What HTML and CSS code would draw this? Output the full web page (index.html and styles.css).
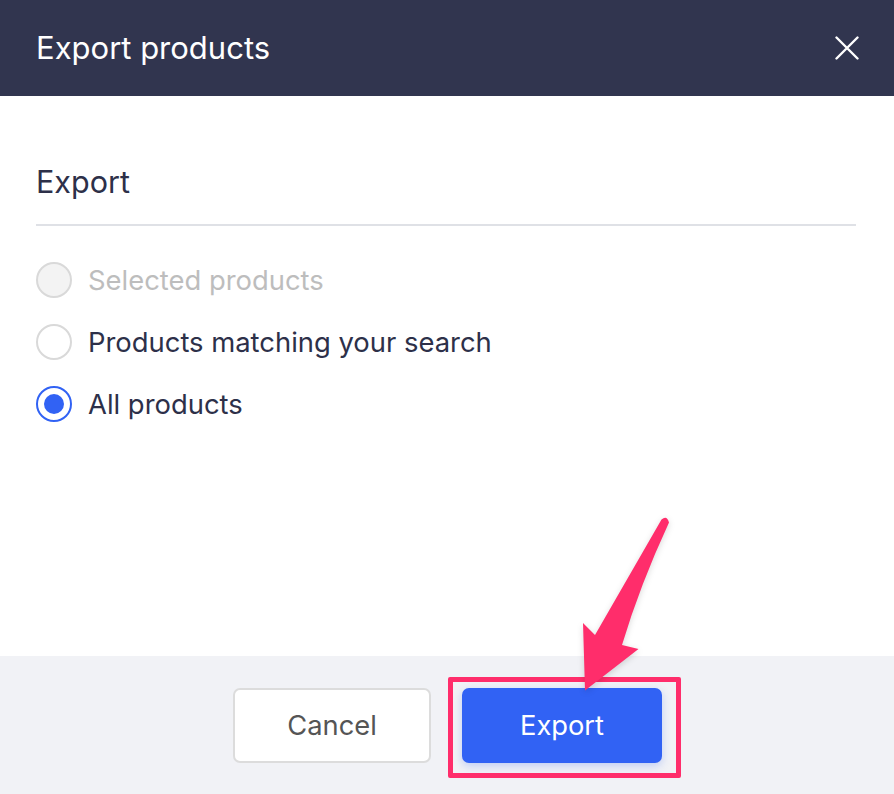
FILE: index.html
```html
<!DOCTYPE html>
<html lang="en">
<head>
<meta charset="utf-8">
<title>Export products</title>
<link rel="stylesheet" href="styles.css">
</head>
<body>
<div class="modal">
  <header class="modal-header">
    <h1 class="modal-title">Export products</h1>
    <button class="close-btn" aria-label="Close">
      <svg viewBox="0 0 24 24" width="24" height="24"><path d="M1.5 1.5 L22.5 22.5 M22.5 1.5 L1.5 22.5" stroke="#fff" stroke-width="2.4" stroke-linecap="round" fill="none"/></svg>
    </button>
  </header>
  <main class="modal-body">
    <h2 class="section-title">Export</h2>
    <div class="radio-list">
      <label class="radio-row is-disabled"><span class="radio"></span><span class="radio-label">Selected products</span></label>
      <label class="radio-row"><span class="radio"></span><span class="radio-label">Products matching your search</span></label>
      <label class="radio-row is-checked"><span class="radio"></span><span class="radio-label">All products</span></label>
    </div>
  </main>
  <footer class="modal-footer">
    <button class="btn btn-cancel">Cancel</button>
    <div class="highlight-wrap">
      <button class="btn btn-primary">Export</button>
      <span class="highlight"></span>
    </div>
  </footer>
  <svg class="arrow" width="110" height="195" viewBox="0 0 110 195">
    <path d="M91.5 14.5 L25 130 L13 118 L15 185.5 L68.5 144 L52 140 Q70 80 99 17.5 Q97 10 91.5 14.5 Z" fill="#ff2d6b"/>
  </svg>
</div>
</body>
</html>
```
FILE: styles.css
```css
* { box-sizing: border-box; }
html, body { margin: 0; padding: 0; }
body {
  font-family: Inter, "Noto Sans", sans-serif;
  background: #ffffff;
  color: #2d3049;
}
.modal {
  position: relative;
  width: 894px;
  height: 794px;
  display: flex;
  flex-direction: column;
  background: #fff;
  overflow: hidden;
}
.modal-header {
  height: 96px;
  flex: none;
  background: #31354f;
  display: flex;
  align-items: center;
  justify-content: space-between;
  padding: 0 35px 0 36px;
}
.modal-title {
  margin: 0;
  font-size: 31px;
  line-height: 36px;
  font-weight: 400;
  color: #fff;
  letter-spacing: 0;
}
.close-btn {
  border: 0;
  background: none;
  padding: 0;
  width: 24px;
  height: 24px;
  display: block;
}
.close-btn svg { display: block; }
.modal-body {
  flex: 1;
  padding: 68px 38px 0 36px;
}
.section-title {
  margin: 0;
  font-size: 30.5px;
  line-height: 36px;
  font-weight: 400;
  color: #2d3049;
  padding-bottom: 24px;
  border-bottom: 2px solid #dfe1e6;
}
.radio-list {
  margin-top: 36px;
  display: flex;
  flex-direction: column;
  gap: 26px;
}
.radio-row {
  display: flex;
  align-items: center;
  gap: 16px;
  height: 36px;
  font-size: 27.4px;
  color: #2d3049;
}
.radio {
  width: 36px;
  height: 36px;
  border-radius: 50%;
  border: 2px solid #d9d9d9;
  background: #fff;
  flex: none;
  position: relative;
}
.is-disabled .radio { background: #f3f3f3; }
.is-disabled .radio-label { color: #bdbdbd; }
.is-checked .radio { border-color: #3162f4; }
.is-checked .radio::after {
  content: "";
  position: absolute;
  left: 6px;
  top: 6px;
  width: 20px;
  height: 20px;
  border-radius: 50%;
  background: #3162f4;
}
.modal-footer {
  height: 138px;
  flex: none;
  background: #f1f2f6;
  display: flex;
  align-items: center;
  justify-content: center;
  gap: 31px;
}
.btn {
  font-family: Inter, "Noto Sans", sans-serif;
  font-size: 27.3px;
  height: 75px;
  border-radius: 7px;
  cursor: pointer;
}
.btn-cancel {
  width: 198px;
  background: #fff;
  border: 2px solid #dcdcdc;
  color: #555;
  margin-left: 1px;
}
.highlight-wrap { position: relative; }
.btn-primary {
  width: 200px;
  background: #3162f4;
  color: #fff;
  border: 0;
  display: block;
  box-shadow: 0 3px 8px rgba(49, 98, 244, 0.25);
}
.highlight {
  position: absolute;
  left: -14px;
  right: -19px;
  top: -11px;
  bottom: -15px;
  border: 5px solid #ff2d6b;
  border-radius: 2px;
  pointer-events: none;
}
.arrow {
  position: absolute;
  left: 570px;
  top: 505px;
  filter: drop-shadow(0 2px 3px rgba(0,0,0,0.15));
}
```
